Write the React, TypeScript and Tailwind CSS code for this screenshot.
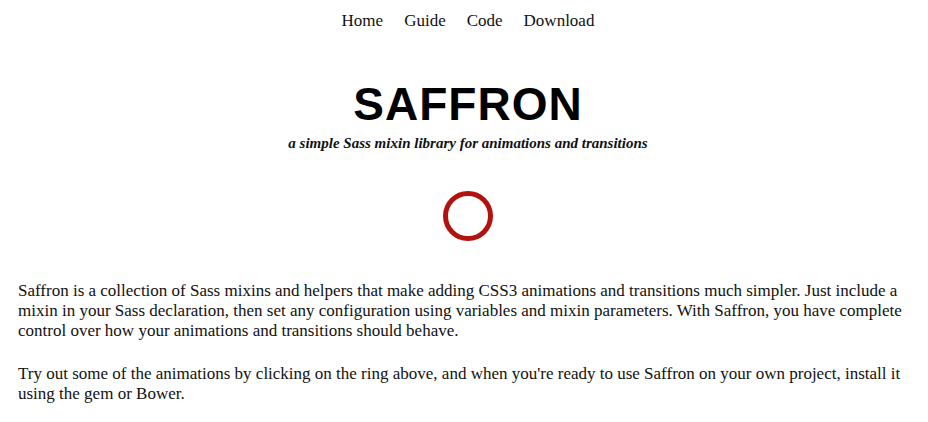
const navLinks = ['Home', 'Guide', 'Code', 'Download']

function Ring() {
  return (
    <button
      type="button"
      aria-label="Play animation"
      className="block w-[50px] h-[50px] rounded-full border-[5px] border-[#b2130f] bg-transparent"
    />
  )
}

export default function App() {
  return (
    <div className="min-h-[422px] bg-white text-[#111] font-['Liberation_Serif',serif]">
      <nav className="pt-[9px] pl-[8px] flex justify-center gap-[21px] text-[17px] leading-[24px]">
        {navLinks.map((link) => (
          <a key={link} href="#" className="text-[#111]">
            {link}
          </a>
        ))}
      </nav>

      <header className="mt-[48px] pl-[8px] flex flex-col items-center">
        <h1 className="font-['Liberation_Sans',sans-serif] font-bold text-[46px] leading-[46px] tracking-[1px] text-black">
          SAFFRON
        </h1>
        <p className="mt-[6px] italic font-bold text-[15px] leading-[20px]">
          a simple Sass mixin library for animations and transitions
        </p>
        <div className="mt-[38px]">
          <Ring />
        </div>
      </header>

      <main className="mt-[40px] px-[18px] text-[17px] leading-[20px]">
        <p>
          Saffron is a collection of Sass mixins and helpers that make adding CSS3 animations and
          transitions much simpler. Just include a mixin in your Sass declaration, then set any
          configuration using variables and mixin parameters. With Saffron, you have complete
          control over how your animations and transitions should behave.
        </p>
        <p className="mt-[23px]">
          Try out some of the animations by clicking on the ring above, and when you're ready to
          use Saffron on your own project, install it using the gem or Bower.
        </p>
      </main>
    </div>
  )
}
